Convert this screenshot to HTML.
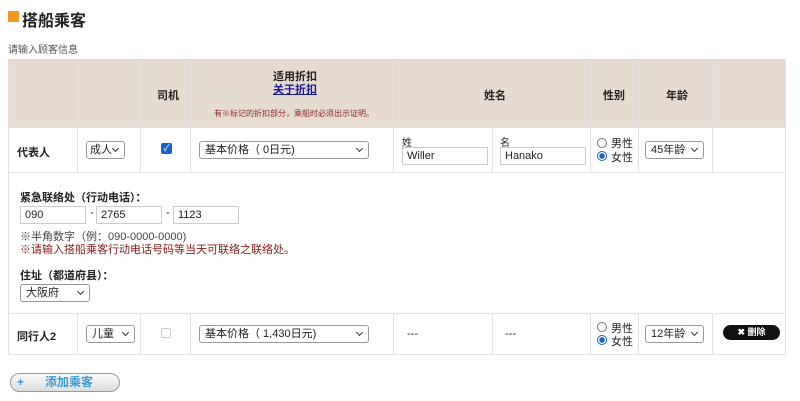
<!DOCTYPE html>
<html><head><meta charset="utf-8"><style>
*{box-sizing:border-box;margin:0;padding:0}
body{width:800px;height:401px;background:#fff;font-family:"Liberation Sans","Noto Sans CJK SC",sans-serif;font-size:11px;color:#222;position:relative;overflow:hidden}
.a{position:absolute}
.hd{background:#e6dbd0}
.vl{position:absolute;width:1px;background:#e2e2e2}
.hl{position:absolute;height:1px;background:#e2e2e2}
.sel{position:absolute;border:1px solid #999;border-radius:3px;background:#fff;font-size:11px;padding-left:5px;line-height:16px;height:18px}
.sel:after{content:"";position:absolute;right:6px;top:4px;width:4px;height:4px;border-right:1.3px solid #333;border-bottom:1.3px solid #333;transform:rotate(45deg)}
.inp{position:absolute;border:1px solid #ccc;background:#fff;height:18px;font-size:11px;padding-left:4px;line-height:16px}
.b{font-weight:bold}
.rad{position:absolute;width:10px;height:10px;border-radius:50%;border:1px solid #777;background:#fff}
.rad.on{border:1px solid #1a63c2;background:radial-gradient(circle,#1a63c2 2.5px,#fff 3px)}
</style></head><body>
<div class="a" style="left:8px;top:11px;width:11px;height:11px;background:#f39a1e"></div>
<div class="a b" style="left:22px;top:7px;font-size:16px">搭船乘客</div>
<div class="a" style="left:8px;top:41px;font-size:10px;color:#555">请输入顾客信息</div>
<div class="a hd" style="left:8px;top:59px;width:778px;height:68px"></div>
<div class="a" style="left:8px;top:59px;width:778px;height:296px;border:1px solid #e2e2e2;border-top:none"></div>
<div class="hl" style="left:8px;top:127px;width:778px"></div>
<div class="hl" style="left:8px;top:172px;width:778px"></div>
<div class="hl" style="left:8px;top:313px;width:778px"></div>
<div class="vl" style="left:77px;top:59px;height:113px"></div><div class="vl" style="left:77px;top:313px;height:42px"></div>
<div class="vl" style="left:140px;top:59px;height:113px"></div><div class="vl" style="left:140px;top:313px;height:42px"></div>
<div class="vl" style="left:190px;top:59px;height:113px"></div><div class="vl" style="left:190px;top:313px;height:42px"></div>
<div class="vl" style="left:393px;top:59px;height:113px"></div><div class="vl" style="left:393px;top:313px;height:42px"></div>
<div class="vl" style="left:492px;top:127px;height:45px"></div><div class="vl" style="left:492px;top:313px;height:42px"></div>
<div class="vl" style="left:590px;top:59px;height:113px"></div><div class="vl" style="left:590px;top:313px;height:42px"></div>
<div class="vl" style="left:638px;top:59px;height:113px"></div><div class="vl" style="left:638px;top:313px;height:42px"></div>
<div class="vl" style="left:712px;top:59px;height:113px"></div><div class="vl" style="left:712px;top:313px;height:42px"></div>
<div class="a b" style="left:157px;top:87px">司机</div>
<div class="a b" style="left:273px;top:68px">适用折扣</div>
<div class="a b" style="left:273px;top:81px;color:#1a1aa0;text-decoration:underline">关于折扣</div>
<div class="a" style="left:214px;top:108px;font-size:8px;color:#8a2a2a">有※标记的折扣部分，乘船时必须出示证明。</div>
<div class="a b" style="left:484px;top:87px">姓名</div>
<div class="a b" style="left:603px;top:87px">性别</div>
<div class="a b" style="left:666px;top:87px">年龄</div>
<div class="a b" style="left:17px;top:144px">代表人</div>
<div class="sel" style="left:86px;top:141px;width:39px;padding-left:3px">成人</div>
<div class="a" style="left:161px;top:143px;width:11px;height:11px;background:#1a63c2;border-radius:2px;color:#fff;font-size:9px;line-height:11px;text-align:center">✓</div>
<div class="sel" style="left:199px;top:141px;width:170px">基本价格（ 0日元)</div>
<div class="a" style="left:402px;top:134px;font-size:10px">姓</div>
<div class="inp" style="left:402px;top:147px;width:86px">Willer</div>
<div class="a" style="left:500px;top:134px;font-size:10px">名</div>
<div class="inp" style="left:500px;top:147px;width:86px">Hanako</div>
<div class="rad" style="left:597px;top:138px"></div><div class="a" style="left:611px;top:135px">男性</div>
<div class="rad on" style="left:597px;top:151px"></div><div class="a" style="left:611px;top:149px">女性</div>
<div class="sel" style="left:645px;top:141px;width:59px">45年龄</div>
<div class="a b" style="left:20px;top:189px">紧急联络处（行动电话）：</div>
<div class="inp" style="left:20px;top:206px;width:66px">090</div>
<div class="a" style="left:90px;top:207px">-</div>
<div class="inp" style="left:96px;top:206px;width:66px">2765</div>
<div class="a" style="left:166px;top:207px">-</div>
<div class="inp" style="left:173px;top:206px;width:66px">1123</div>
<div class="a" style="left:20px;top:228px;color:#444">※半角数字（例：090-0000-0000)</div>
<div class="a" style="left:20px;top:241px;color:#8a1a1a">※请输入搭船乘客行动电话号码等当天可联络之联络处。</div>
<div class="a b" style="left:20px;top:267px">住址（都道府县）：</div>
<div class="sel" style="left:20px;top:284px;width:70px">大阪府</div>
<div class="a b" style="left:17px;top:328px">同行人2</div>
<div class="sel" style="left:86px;top:325px;width:49px">儿童</div>
<div class="a" style="left:161px;top:328px;width:10px;height:10px;border:1px solid #ccc;border-radius:2px"></div>
<div class="sel" style="left:199px;top:325px;width:170px">基本价格（ 1,430日元)</div>
<div class="a" style="left:407px;top:328px">---</div>
<div class="a" style="left:505px;top:328px">---</div>
<div class="rad" style="left:597px;top:322px"></div><div class="a" style="left:611px;top:320px">男性</div>
<div class="rad on" style="left:597px;top:335px"></div><div class="a" style="left:611px;top:333px">女性</div>
<div class="sel" style="left:645px;top:325px;width:59px">12年龄</div>
<div class="a b" style="left:723px;top:325px;width:57px;height:15px;background:#111;border-radius:8px;color:#fff;font-size:9px;line-height:15px;text-align:center">✖ 删除</div>
<div class="a b" style="left:10px;top:373px;width:110px;height:19px;border:1px solid #999;border-radius:10px;background:linear-gradient(#fafafa,#ddd);color:#3a9ad8;font-size:12px;line-height:17px"><span style="position:absolute;left:6px">+</span><span style="position:absolute;left:34px">添加乘客</span></div>
</body></html>
